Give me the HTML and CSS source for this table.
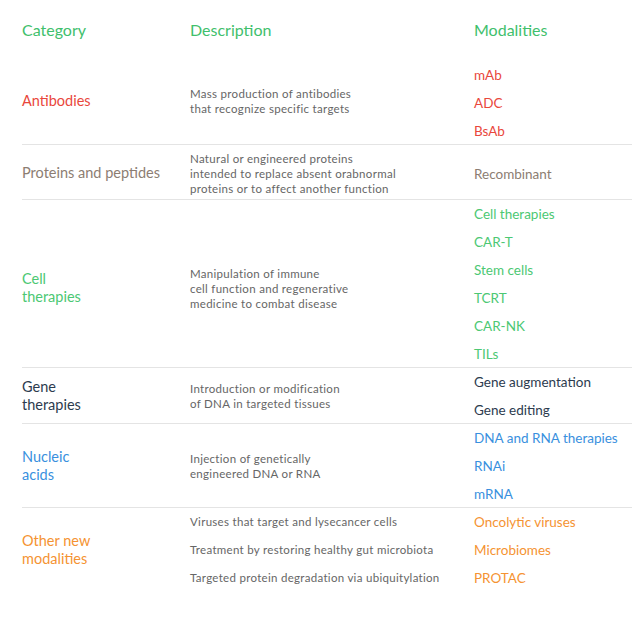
FILE: index.html
```html
<!DOCTYPE html>
<html lang="en">
<head>
<meta charset="utf-8">
<title>Modalities</title>
<link rel="stylesheet" href="styles.css">
</head>
<body>
<div class="table">
  <div class="head">
    <div>Category</div>
    <div>Description</div>
    <div>Modalities</div>
  </div>

  <div class="row red up">
    <div class="cat">Antibodies</div>
    <div class="desc">Mass production of antibodies<br>that recognize specific targets</div>
    <ul class="mods"><li>mAb</li><li>ADC</li><li>BsAb</li></ul>
  </div>

  <div class="row brown">
    <div class="cat">Proteins and peptides</div>
    <div class="desc pad">Natural or engineered proteins<br>intended to replace absent orabnormal<br>proteins or to affect another function</div>
    <ul class="mods"><li>Recombinant</li></ul>
  </div>

  <div class="row green down">
    <div class="cat">Cell<br>therapies</div>
    <div class="desc">Manipulation of immune<br>cell function and regenerative<br>medicine to combat disease</div>
    <ul class="mods"><li>Cell therapies</li><li>CAR-T</li><li>Stem cells</li><li>TCRT</li><li>CAR-NK</li><li>TILs</li></ul>
  </div>

  <div class="row navy">
    <div class="cat">Gene<br>therapies</div>
    <div class="desc">Introduction or modification<br>of DNA in targeted tissues</div>
    <ul class="mods"><li>Gene augmentation</li><li>Gene editing</li></ul>
  </div>

  <div class="row blue">
    <div class="cat">Nucleic<br>acids</div>
    <div class="desc">Injection of genetically<br>engineered DNA or RNA</div>
    <ul class="mods"><li>DNA and RNA therapies</li><li>RNAi</li><li>mRNA</li></ul>
  </div>

  <div class="row orange last">
    <div class="cat">Other new<br>modalities</div>
    <ul class="desc list"><li>Viruses that target and lysecancer cells</li><li>Treatment by restoring healthy gut microbiota</li><li>Targeted protein degradation via ubiquitylation</li></ul>
    <ul class="mods"><li>Oncolytic viruses</li><li>Microbiomes</li><li>PROTAC</li></ul>
  </div>
</div>
</body>
</html>
```

FILE: styles.css
```css
html, body {
  margin: 0;
  padding: 0;
  background: #ffffff;
}
body {
  font-family: "Lato", "Open Sans", sans-serif;
}
.table {
  padding-left: 22px;
}
.head,
.row {
  display: grid;
  grid-template-columns: 168px 284px 1fr;
  align-items: center;
}
.head {
  height: 60px;
  color: #3fc06c;
  font-size: 16px;
  line-height: 20px;
  padding-bottom: 1px;
}
.row {
  box-shadow: inset 0 -1px 0 #e4e4e4;
}
.row.last {
  box-shadow: none;
}
.cat {
  font-size: 14.5px;
  line-height: 18px;
}
.desc {
  font-size: 11.5px;
  line-height: 15px;
  color: #666666;
  letter-spacing: 0.3px;
}
.desc.pad {
  padding: 6px 0 4px;
}
.row.up .cat,
.row.up .desc {
  padding-bottom: 5px;
}
.row.down .cat,
.row.down .desc {
  padding-top: 8px;
}
ul {
  list-style: none;
  margin: 0;
  padding: 0;
}
.mods li,
.list li {
  height: 28px;
  line-height: 28px;
}
.mods li {
  font-size: 13.5px;
}
.brown .mods li {
  padding-top: 3px;
}
.red { color: #e9473c; }
.brown { color: #8c7d72; }
.green { color: #4cc873; }
.navy { color: #2c3b4e; }
.blue { color: #3990de; }
.orange { color: #f59332; }
.row .desc { color: #666666; }
```
